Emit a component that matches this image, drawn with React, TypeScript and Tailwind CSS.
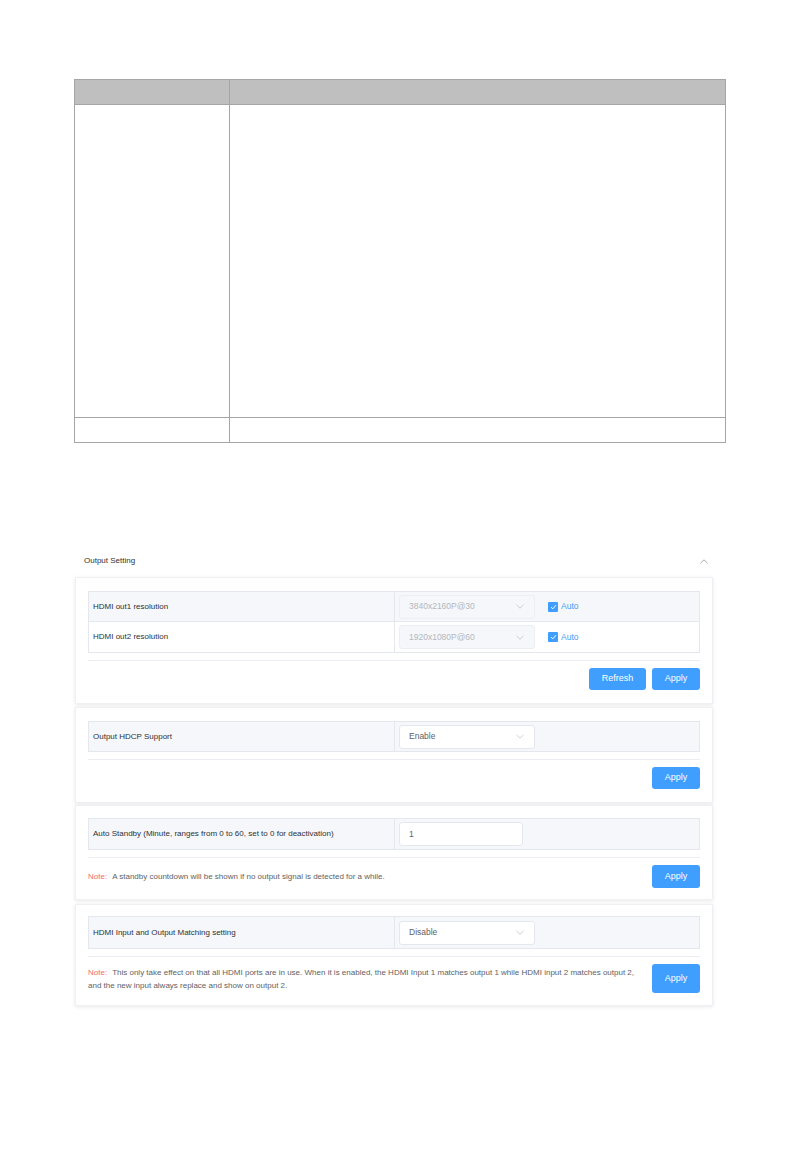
import React from "react";

const font = { fontFamily: '"Liberation Sans", Arial, sans-serif' };

const ChevronDown = () => (
  <svg width="8" height="5" viewBox="0 0 8 5" fill="none">
    <path d="M0.5 0.8 L4 4.2 L7.5 0.8" stroke="#c0c4cc" strokeWidth="0.8" />
  </svg>
);

const ChevronUp = () => (
  <svg width="8" height="5" viewBox="0 0 8 5" fill="none">
    <path d="M0.5 4.2 L4 0.8 L7.5 4.2" stroke="#909399" strokeWidth="0.8" />
  </svg>
);

const Checkbox = () => (
  <span className="w-[10px] h-[10px] rounded-[1px] bg-[#409eff] flex items-center justify-center">
    <svg width="7" height="6" viewBox="0 0 7 6" fill="none">
      <path d="M1 3.2 L2.8 4.8 L6 1.2" stroke="#ffffff" strokeWidth="1" />
    </svg>
  </span>
);

type SelectProps = { value: string; disabled?: boolean; w?: string };

const Select: React.FC<SelectProps> = ({ value, disabled, w }) => (
  <div
    className={`h-[24px] ${w ?? "w-[136px]"} rounded-[3px] border flex items-center justify-between pl-[9px] pr-[10px] text-[8.5px] ${
      disabled
        ? "bg-[#f5f7fa] border-[#eceef2] text-[#b4b8bf]"
        : "bg-white border-[#e4e7ed] text-[#606266]"
    }`}
  >
    <span>{value}</span>
    <ChevronDown />
  </div>
);

const Row: React.FC<{ label: string; children: React.ReactNode; gray?: boolean; last?: boolean; h?: string }> = ({
  label,
  children,
  gray,
  last,
  h,
}) => (
  <div className={`flex ${h ?? "h-[30px]"} ${gray ? "bg-[#f5f7fa]" : "bg-white"} ${last ? "" : "border-b border-[#e4e7ed]"}`}>
    <div className="w-[306px] border-r border-[#e4e7ed] flex items-center pl-[4px] text-[8px] text-[#303133]">{label}</div>
    <div className="flex-1 flex items-center gap-[13px] pl-[4px]">{children}</div>
  </div>
);

const Btn: React.FC<{ label: string; h?: string; w?: string }> = ({ label, h, w }) => (
  <button
    className={`${h ?? "h-[22px]"} ${w ?? "w-[48px]"} shrink-0 rounded-[3px] bg-[#409eff] text-white text-[9px] flex items-center justify-center`}
  >
    {label}
  </button>
);

const Note: React.FC<{ text: string }> = ({ text }) => (
  <p className="text-[8px] leading-[13px] text-[#606266] max-w-[552px]">
    <span className="inline-block text-[#f56c6c] mr-[5px]">Note:</span>
    {text}
  </p>
);

const Card: React.FC<{ children: React.ReactNode; className: string }> = ({ children, className }) => (
  <div className={`bg-white border border-[#eef0f4] shadow-[0_1px_4px_rgba(0,0,0,0.09)] px-[12px] ${className}`}>
    {children}
  </div>
);

export default function App() {
  return (
    <div className="w-[794px] min-h-[1151px] bg-white pt-[79px]" style={font}>
      {/* blank spec table */}
      <div className="ml-[74px] w-[652px] border border-[#a5a5a5]">
        <div className="flex h-[25px] bg-[#bfbfbf] border-b border-[#a5a5a5]">
          <div className="w-[155px] border-r border-[#a5a5a5]" />
          <div className="flex-1" />
        </div>
        <div className="flex h-[313px] border-b border-[#a5a5a5]">
          <div className="w-[155px] border-r border-[#a5a5a5]" />
          <div className="flex-1" />
        </div>
        <div className="flex h-[24px]">
          <div className="w-[155px] border-r border-[#a5a5a5]" />
          <div className="flex-1" />
        </div>
      </div>

      {/* output setting panel */}
      <div className="ml-[75px] w-[638px] mt-[102px]">
        <div className="h-[32px] flex items-center justify-between pl-[9px] pr-[5px] text-[8px] text-[#303133]">
          <span>Output Setting</span>
          <ChevronUp />
        </div>

        <Card className="pt-[13px] pb-[13px]">
          <div className="border border-[#e4e7ed]">
            <Row label="HDMI out1 resolution" gray>
              <Select value="3840x2160P@30" disabled />
              <span className="flex items-center gap-[3px] text-[8.5px] text-[#409eff]">
                <Checkbox />
                Auto
              </span>
            </Row>
            <Row label="HDMI out2 resolution" last>
              <Select value="1920x1080P@60" disabled />
              <span className="flex items-center gap-[3px] text-[8.5px] text-[#409eff]">
                <Checkbox />
                Auto
              </span>
            </Row>
          </div>
          <div className="mt-[7px] border-t border-[#ebeef5]" />
          <div className="mt-[7px] flex justify-end gap-[6px]">
            <Btn label="Refresh" w="w-[57px]" />
            <Btn label="Apply" />
          </div>
        </Card>

        <Card className="mt-[3px] pt-[13px] pb-[13px]">
          <div className="border border-[#e4e7ed]">
            <Row label="Output HDCP Support" gray last h="h-[29px]">
              <Select value="Enable" />
            </Row>
          </div>
          <div className="mt-[7px] border-t border-[#ebeef5]" />
          <div className="mt-[7px] flex justify-end">
            <Btn label="Apply" />
          </div>
        </Card>

        <Card className="mt-[2px] pt-[12px] pb-[11px]">
          <div className="border border-[#e4e7ed]">
            <Row label="Auto Standby (Minute, ranges from 0 to 60, set to 0 for deactivation)" gray last h="h-[30px]">
              <div className="h-[24px] w-[124px] bg-white border border-[#e4e7ed] rounded-[3px] flex items-center pl-[9px] text-[8.5px] text-[#606266]">
                1
              </div>
            </Row>
          </div>
          <div className="mt-[7px] border-t border-[#ebeef5]" />
          <div className="mt-[7px] flex items-center justify-between">
            <Note text="A standby countdown will be shown if no output signal is detected for a while." />
            <Btn label="Apply" h="h-[23px]" />
          </div>
        </Card>

        <Card className="mt-[4px] pt-[11px] pb-[12px]">
          <div className="border border-[#e4e7ed]">
            <Row label="HDMI Input and Output Matching setting" gray last h="h-[31px]">
              <Select value="Disable" />
            </Row>
          </div>
          <div className="mt-[7px] border-t border-[#ebeef5]" />
          <div className="mt-[7px] flex items-center justify-between">
            <Note text="This only take effect on that all HDMI ports are in use. When it is enabled, the HDMI Input 1 matches output 1 while HDMI input 2 matches output 2, and the new input always replace and show on output 2." />
            <Btn label="Apply" h="h-[29px]" />
          </div>
        </Card>
      </div>
    </div>
  );
}
